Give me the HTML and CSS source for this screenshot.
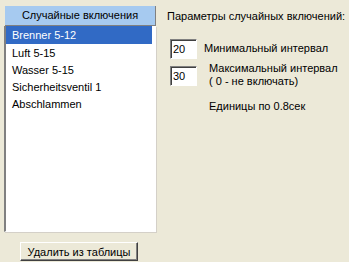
FILE: index.html
```html
<!DOCTYPE html>
<html lang="ru">
<head>
    <meta charset="UTF-8">
    <title>Случайные включения</title>
    <link rel="stylesheet" href="styles.css">
</head>
<body>
    <div class="window">
        <div class="left">
            <div class="list-header">Случайные включения</div>
            <ul class="list">
                <li class="selected">Brenner 5-12</li>
                <li>Luft 5-15</li>
                <li>Wasser 5-15</li>
                <li>Sicherheitsventil 1</li>
                <li>Abschlammen</li>
            </ul>
            <button class="btn" type="button">Удалить из таблицы</button>
        </div>
        <div class="right">
            <p class="title">Параметры случайных включений:</p>
            <div class="field">
                <input class="num" type="text" value="20">
                <span class="label first">Минимальный интервал</span>
            </div>
            <div class="field">
                <input class="num" type="text" value="30">
                <span class="label second">Максимальный интервал<br>( 0 - не включать)</span>
            </div>
            <p class="units">Единицы по 0.8сек</p>
        </div>
    </div>
</body>
</html>
```

FILE: styles.css
```css
body {
    margin: 0;
    background-color: #ece9d8;
    font-family: "Liberation Sans", Arial, sans-serif;
    font-size: 11px;
    color: #000;
}
.window {
    display: flex;
    width: 349px;
    height: 262px;
    white-space: nowrap;
}
.left {
    width: 152px;
    margin-left: 4px;
    padding-top: 6px;
    display: flex;
    flex-direction: column;
}
.list-header {
    height: 20px;
    line-height: 19px;
    margin-left: 1px;
    text-align: center;
    background-color: #a6caf0;
    border-right: 1px solid #808080;
    border-bottom: 1px solid #808080;
    box-sizing: border-box;
}
.list {
    list-style: none;
    margin: 0;
    padding: 0;
    height: 206px;
    background-color: #fff;
    border-left: 2px solid #808080;
    border-right: 1px solid #fff;
    border-bottom: 1px solid #fff;
    box-shadow: 1px 1px 0 #d4d0c8;
    box-sizing: border-box;
}
.list li {
    height: 17px;
    line-height: 19px;
    padding-left: 6px;
    margin-right: 3px;
}
.list li.selected {
    height: 18px;
    background-color: #316ac5;
    color: #fff;
}
.btn {
    margin: 10px 0 0 16px;
    width: 118px;
    height: 19px;
    padding: 0;
    font-family: "Liberation Sans", Arial, sans-serif;
    font-size: 11px;
    background-color: #ece9d8;
    border: 1px solid;
    border-color: #fff #404040 #404040 #fff;
    box-shadow: inset -1px -1px 0 #808080;
}
.right {
    padding-left: 11px;
    padding-top: 9px;
}
.title {
    margin: 0;
    height: 14px;
    line-height: 14px;
}
.field {
    display: flex;
    align-items: flex-start;
    margin-top: 7px;
}
.field:first-of-type {
    margin-top: 16px;
}
.num {
    width: 27px;
    height: 20px;
    margin: 0 0 0 3px;
    padding: 0 0 0 2px;
    box-sizing: border-box;
    font-family: "Liberation Sans", Arial, sans-serif;
    font-size: 11px;
    background-color: #fff;
    border: 1px solid;
    border-color: #808080 #fff #fff #808080;
    box-shadow: inset 1px 1px 0 #404040;
}
.label {
    line-height: 13px;
}
.label.first {
    margin-left: 7px;
    padding-top: 3px;
}
.label.second {
    margin-left: 12px;
    margin-top: -4px;
}
.units {
    margin: 12px 0 0 42px;
}
```
